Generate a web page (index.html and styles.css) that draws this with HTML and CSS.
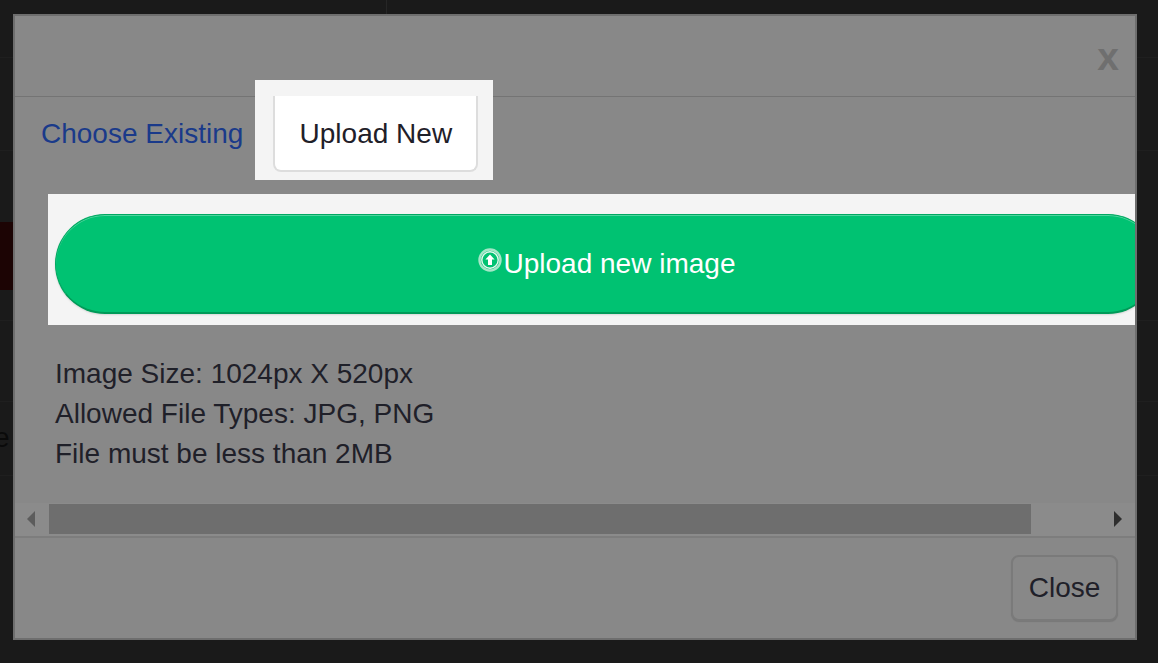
FILE: index.html
```html
<!DOCTYPE html>
<html lang="en">
<head>
<meta charset="utf-8">
<title>Upload image</title>
<link rel="stylesheet" href="styles.css">
</head>
<body>
<div class="behind" aria-hidden="true">
  <span class="behind-corner"></span>
  <span class="behind-line line-a"></span>
  <span class="behind-line line-b"></span>
  <span class="behind-line line-c"></span>
  <span class="behind-line line-d"></span>
  <span class="behind-line line-e"></span>
  <span class="behind-red"></span>
  <span class="behind-letter">e</span>
</div>
<div class="modal">
  <header class="modal-header"><span class="modal-x">x</span></header>
  <nav class="tabs">
    <a class="tab-link" href="#">Choose Existing</a>
    <div class="tab-spot"><div class="tab-active">Upload New</div></div>
  </nav>
  <div class="upload-spot">
    <button class="upload-btn" type="button">
      <svg class="upload-icon" viewBox="0 0 24 24" width="24" height="24">
        <circle cx="12" cy="12" r="10.5" fill="none" stroke="#a5e6c8" stroke-width="2.4"/>
        <circle cx="12" cy="12" r="8.2" fill="none" stroke="#e4f8ee" stroke-width="1.4"/>
        <path d="M12 6.5 L16.6 11.5 H14 V17 H10 V11.5 H7.4 Z" fill="#fff"/>
      </svg><span>Upload new image</span>
    </button>
  </div>
  <div class="rules">
    <div>Image Size: 1024px X 520px</div>
    <div>Allowed File Types: JPG, PNG</div>
    <div>File must be less than 2MB</div>
  </div>
  <div class="hscroll">
    <span class="arrow arrow-left"></span>
    <span class="thumb"></span>
    <span class="arrow arrow-right"></span>
  </div>
  <footer class="modal-footer"><button class="close-btn" type="button">Close</button></footer>
</div>
</body>
</html>
```
FILE: styles.css
```css
* { box-sizing: border-box; }
html, body { margin: 0; height: 100%; }
body {
  background: #1a1a1a;
  font-family: "Liberation Sans", Arial, sans-serif;
  color: #1f2029;
  overflow: hidden;
  padding: 14px 21px 0 13px;
  position: relative;
}
.behind-corner {
  position: absolute; left: 300px; top: -10px; width: 87px; height: 24px;
  border-right: 1px solid #262626;
}
.behind-line { position: absolute; left: 0; right: 0; height: 1px; background: #1f1f1f; }
.line-a { top: 57px; }
.line-b { top: 150px; }
.line-c { top: 320px; }
.line-d { top: 401px; }
.line-e { top: 475px; }
.behind-red { position: absolute; left: 0; top: 222px; width: 13px; height: 68px; background: #1c0404; }
.behind-letter { position: absolute; left: -6px; top: 422px; font-size: 28px; color: #0a0a0a; line-height: 32px; }
.modal {
  position: relative;
  width: 1124px;
  height: 626px;
  background: #888;
  border: 2px solid #6e6e6e;
  overflow: hidden;
}
.modal-header {
  height: 81px;
  border-bottom: 1px solid #747474;
  position: relative;
  text-align: right;
  padding-right: 16px;
}
.modal-x {
  display: block;
  font-size: 39px;
  font-weight: 700;
  line-height: 40px;
  padding-top: 21px;
  color: #6f6f6f;
}
.tabs { display: flex; align-items: flex-start; padding-left: 26px; height: 83px; }
.tab-link { color: #1a3a8a; font-size: 28px; line-height: 40px; margin-top: 17px; text-decoration: none; }
.tab-spot {
  margin-top: -17px;
  margin-left: 12px;
  height: 100px;
  background: #f4f4f4;
  padding: 16px 15px 0 18px;
  position: relative;
}
.tab-active {
  width: 205px;
  height: 76px;
  background: #fff;
  border: 2px solid #ddd;
  border-top: 0;
  border-radius: 0 0 8px 8px;
  font-size: 28px;
  line-height: 40px;
  padding-top: 18px;
  text-align: center;
}
.upload-spot {
  margin: 14px 0 0 33px;
  height: 131px;
  background: #f4f4f4;
  padding: 20px 0 0 7px;
  overflow: hidden;
}
.upload-btn {
  width: 1103px;
  height: 100px;
  border-radius: 50px;
  border: 1px solid #00a861;
  border-bottom: 2px solid #009a58;
  background: #00c272;
  box-shadow: inset 0 1px 0 #4fd49e, 0 1px 2px rgba(0,0,0,.12);
  color: #fff;
  font: 28px/40px "Liberation Sans", Arial, sans-serif;
  display: flex;
  align-items: center;
  justify-content: center;
  padding: 0;
}
.upload-icon { margin: -8px 2px 0 0; filter: blur(.5px); flex: none; }
.rules { padding: 29px 0 0 40px; font-size: 28px; line-height: 40px; }
.hscroll {
  margin-top: 29px;
  height: 33px;
  background: #8b8b8b;
  position: relative;
}
.thumb { position: absolute; left: 34px; top: 1px; width: 982px; height: 30px; background: #6e6e6e; }
.arrow { position: absolute; top: 8px; width: 0; height: 0; border-top: 8px solid transparent; border-bottom: 8px solid transparent; }
.arrow-left { left: 12px; border-right: 8px solid #5c5c5c; }
.arrow-right { right: 13px; border-left: 8px solid #2e2e2e; }
.modal-footer {
  border-top: 2px solid #7d7d7d;
  padding: 17px 17px 0 0;
  display: flex;
  justify-content: flex-end;
}
.close-btn {
  width: 107px;
  height: 66px;
  background: #888;
  border: 2px solid #7a7a7a;
  border-radius: 8px;
  box-shadow: 0 1px 1px rgba(0,0,0,.12);
  color: #1f2029;
  font: 28px/40px "Liberation Sans", Arial, sans-serif;
  padding: 0;
}
```
